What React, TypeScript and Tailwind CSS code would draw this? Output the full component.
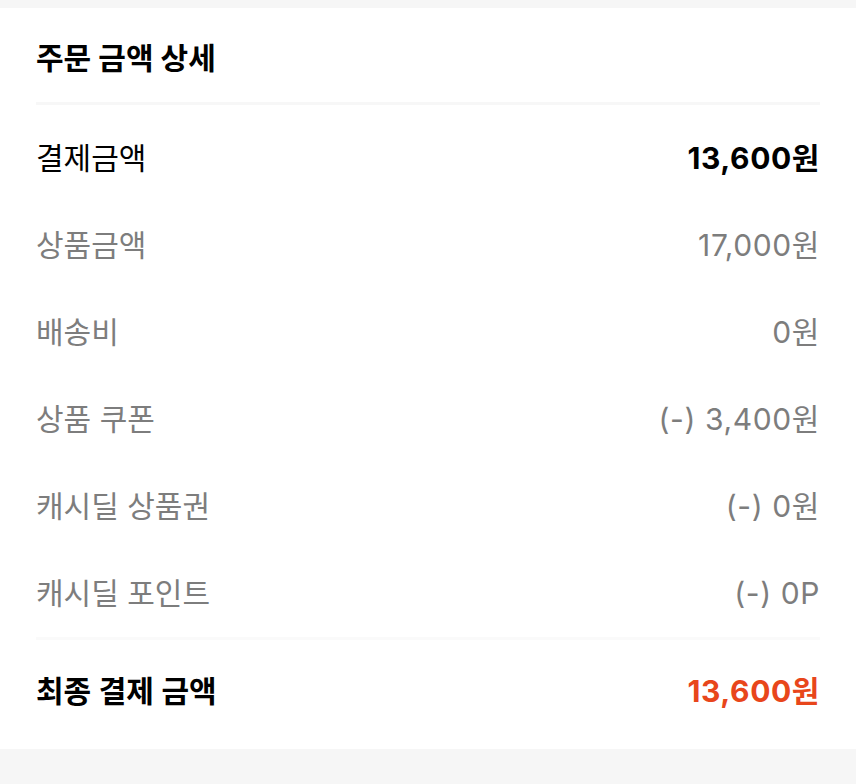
const rows = [
  { label: "결제금액", value: "13,600원", strong: true },
  { label: "상품금액", value: "17,000원" },
  { label: "배송비", value: "0원" },
  { label: "상품 쿠폰", value: "(-) 3,400원" },
  { label: "캐시딜 상품권", value: "(-) 0원" },
  { label: "캐시딜 포인트", value: "(-) 0P" },
]

export default function App() {
  return (
    <div
      className="min-h-[784px] bg-[#f6f6f6] pt-2"
      style={{ fontFamily: 'Inter, "Noto Sans CJK KR", sans-serif' }}
    >
      <div className="bg-white px-[36px]">
        <div className="h-[94px] flex items-center pt-[6px]">
          <h2 className="text-[30px] font-bold text-black">주문 금액 상세</h2>
        </div>
        <div className="h-[3px] bg-[#f7f7f7]" />

        <div className="pt-[10px]">
          {rows.map((row) => (
            <div key={row.label} className="h-[87px] flex items-center justify-between">
              <span className={`text-[30px] ${row.strong ? "text-black" : "text-[#7d7d7d]"}`}>
                {row.label}
              </span>
              <span
                className={`text-[30px] tracking-[0.6px] ${row.strong ? "text-black font-bold" : "text-[#7d7d7d]"}`}
              >
                {row.value}
              </span>
            </div>
          ))}
        </div>

        <div className="h-[3px] bg-[#fafafa]" />

        <div className="h-[109px] flex items-center justify-between pb-[6px]">
          <span className="text-[30px] font-semibold text-black">최종 결제 금액</span>
          <span className="text-[30px] font-bold text-[#e8461b] tracking-[0.6px]">13,600원</span>
        </div>
      </div>
    </div>
  )
}
